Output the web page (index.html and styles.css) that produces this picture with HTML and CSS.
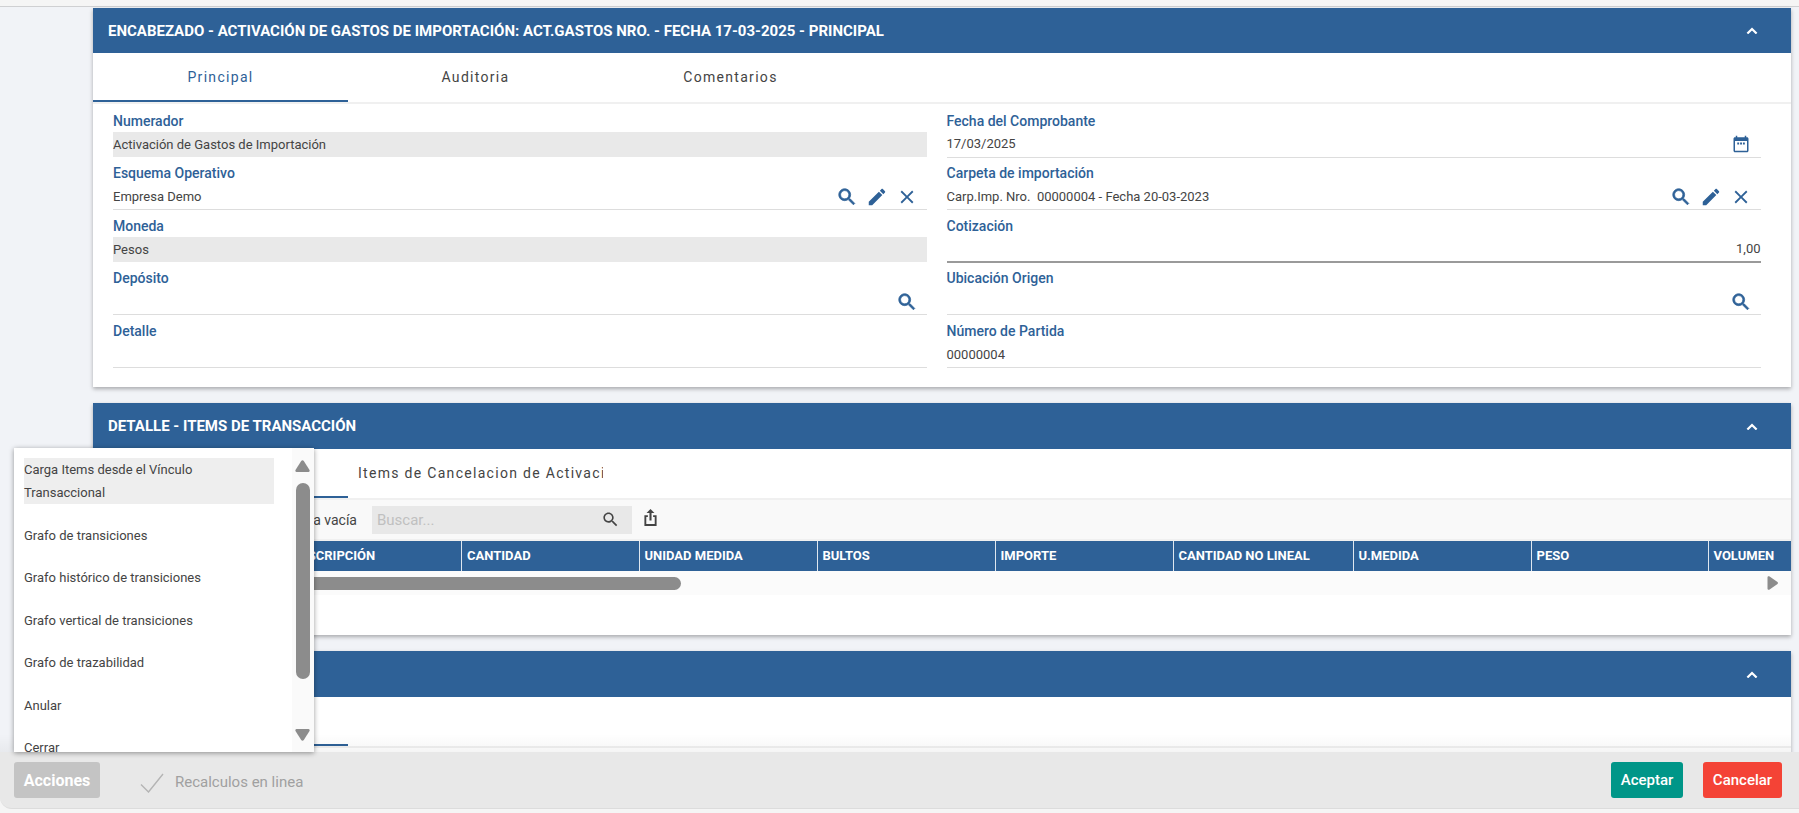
FILE: index.html
```html
<!DOCTYPE html>
<html lang="es">
<head>
<meta charset="utf-8">
<title>Activación de Gastos de Importación</title>
<link rel="stylesheet" href="styles.css">
</head>
<body>
<svg class="defs" aria-hidden="true">
  <symbol id="i-search" viewBox="0 0 24 24"><path d="M15.5 14h-.79l-.28-.27C15.41 12.59 16 11.11 16 9.5 16 5.91 13.09 3 9.5 3S3 5.91 3 9.5 5.91 16 9.5 16c1.61 0 3.09-.59 4.23-1.57l.27.28v.79l5 4.99L20.49 19l-4.99-5zm-6 0C7.01 14 5 11.99 5 9.5S7.01 5 9.5 5 14 7.01 14 9.5 11.99 14 9.5 14z"/></symbol>
  <symbol id="i-edit" viewBox="0 0 24 24"><path d="M3 17.25V21h3.75L17.81 9.94l-3.75-3.75L3 17.25zM20.71 7.04c.39-.39.39-1.02 0-1.41l-2.34-2.34c-.39-.39-1.02-.39-1.41 0l-1.83 1.83 3.75 3.75 1.83-1.83z"/></symbol>
  <symbol id="i-close" viewBox="0 0 24 24"><path d="M19 6.41L17.59 5 12 10.59 6.41 5 5 6.41 10.59 12 5 17.59 6.41 19 12 13.41 17.59 19 19 17.59 13.41 12 19 6.41z"/></symbol>
  <symbol id="i-cal" viewBox="0 0 24 24"><path d="M20 3h-1V1h-2v2H7V1H5v2H4c-1.1 0-2 .9-2 2v16c0 1.1.9 2 2 2h16c1.1 0 2-.9 2-2V5c0-1.1-.9-2-2-2zm0 18H4V8h16v13zM7 10h2.500v2.500H7zM10.800 10h2.500v2.500h-2.500zM14.600 10h2.500v2.500h-2.500z"/></symbol>
  <symbol id="i-up" viewBox="0 0 12 7"><path d="M1.400 6.500 6 2l4.600 4.500" fill="none" stroke="currentColor" stroke-width="2.200"/></symbol>
</svg>

<div class="topbar"></div>

<main class="content">
  <section class="card">
    <header class="card-head">
      <h2>ENCABEZADO - ACTIVACIÓN DE GASTOS DE IMPORTACIÓN: ACT.GASTOS NRO. - FECHA 17-03-2025 - PRINCIPAL</h2>
      <svg class="chev"><use href="#i-up"/></svg>
    </header>
    <nav class="tabs">
      <span class="tab active">Principal</span>
      <span class="tab">Auditoria</span>
      <span class="tab">Comentarios</span>
    </nav>
    <div class="form">
      <div class="field">
        <label>Numerador</label>
        <div class="value readonly">Activación de Gastos de Importación</div>
      </div>
      <div class="field">
        <label>Fecha del Comprobante</label>
        <div class="value"><span class="raise">17/03/2025</span><span class="icons"><svg class="ico cal"><use href="#i-cal"/></svg></span></div>
      </div>
      <div class="field">
        <label>Esquema Operativo</label>
        <div class="value"><span>Empresa Demo</span><span class="icons"><svg class="ico bold"><use href="#i-search"/></svg><svg class="ico"><use href="#i-edit"/></svg><svg class="ico"><use href="#i-close"/></svg></span></div>
      </div>
      <div class="field">
        <label>Carpeta de importación</label>
        <div class="value"><span class="pre">Carp.Imp. Nro.  00000004 - Fecha 20-03-2023</span><span class="icons"><svg class="ico bold"><use href="#i-search"/></svg><svg class="ico"><use href="#i-edit"/></svg><svg class="ico"><use href="#i-close"/></svg></span></div>
      </div>
      <div class="field">
        <label>Moneda</label>
        <div class="value readonly">Pesos</div>
      </div>
      <div class="field">
        <label>Cotización</label>
        <div class="value number">1,00</div>
      </div>
      <div class="field">
        <label>Depósito</label>
        <div class="value"><span></span><span class="icons"><svg class="ico bold"><use href="#i-search"/></svg></span></div>
      </div>
      <div class="field">
        <label>Ubicación Origen</label>
        <div class="value"><span></span><span class="icons"><svg class="ico bold"><use href="#i-search"/></svg></span></div>
      </div>
      <div class="field">
        <label>Detalle</label>
        <div class="value"></div>
      </div>
      <div class="field">
        <label>Número de Partida</label>
        <div class="value">00000004</div>
      </div>
    </div>
  </section>

  <section class="card">
    <header class="card-head tall">
      <h2>DETALLE - ITEMS DE TRANSACCIÓN</h2>
      <svg class="chev"><use href="#i-up"/></svg>
    </header>
    <nav class="tabs">
      <span class="tab active"></span>
      <span class="tab clipped">Items de Cancelacion de Activaci</span>
    </nav>
    <div class="toolbar">
      <span class="status">Grilla vacía</span>
      <div class="search"><span>Buscar...</span><svg class="search-ico"><use href="#i-search"/></svg></div>
      <svg class="share" viewBox="0 0 16 18"><path d="M8 0 3.800 4.200h3.100v8h2.200v-8h3.100zM5.200 6.500H1.500V18h13V6.500h-3.700v2h1.700V16h-9V8.500h1.700z"/></svg>
    </div>
    <div class="grid-head">
      <span></span>
      <span>DESCRIPCIÓN</span>
      <span>CANTIDAD</span>
      <span>UNIDAD MEDIDA</span>
      <span>BULTOS</span>
      <span>IMPORTE</span>
      <span>CANTIDAD NO LINEAL</span>
      <span>U.MEDIDA</span>
      <span>PESO</span>
      <span>VOLUMEN</span>
    </div>
    <div class="hscroll">
      <div class="hthumb"></div>
      <svg class="harrow" viewBox="0 0 11 14"><path d="M.5 1.500C.5.3 1.700-.2 2.600.6l7.900 5.400c.6.500.6 1.500 0 2L2.600 13.400c-.9.800-2.100.3-2.100-.9z"/></svg>
    </div>
    <div class="grid-empty"></div>
  </section>

  <section class="card last">
    <header class="card-head tall">
      <h2></h2>
      <svg class="chev"><use href="#i-up"/></svg>
    </header>
    <nav class="tabs">
      <span class="tab active"></span>
    </nav>
  </section>
</main>

<aside class="menu">
  <ul class="menu-list">
    <li class="selected">Carga Items desde el Vínculo Transaccional</li>
    <li>Grafo de transiciones</li>
    <li>Grafo histórico de transiciones</li>
    <li>Grafo vertical de transiciones</li>
    <li>Grafo de trazabilidad</li>
    <li>Anular</li>
    <li>Cerrar</li>
  </ul>
  <div class="vscroll">
    <svg class="varrow" viewBox="0 0 15 12"><path d="M6.200 1c.7-1 1.900-1 2.600 0l5.700 9c.5.900 0 2-1 2H1.500c-1 0-1.500-1.100-1-2z"/></svg>
    <div class="vthumb"></div>
    <svg class="varrow down" viewBox="0 0 15 12"><path d="M6.200 11c.7 1 1.900 1 2.600 0l5.700-9c.5-.9 0-2-1-2H1.500c-1 0-1.500 1.100-1 2z"/></svg>
  </div>
</aside>

<footer class="footer-wrap">
  <div class="footer">
    <button class="btn disabled">Acciones</button>
    <svg class="check" viewBox="0 0 24 20"><path d="M1 11.500 8.500 19 23 1" fill="none" stroke="currentColor" stroke-width="1.400"/></svg>
    <span class="recalc">Recalculos en linea</span>
    <button class="btn ok">Aceptar</button>
    <button class="btn cancel">Cancelar</button>
  </div>
</footer>
</body>
</html>
```
FILE: styles.css
```css
* { box-sizing: border-box; }
html, body { height: 100%; }
body {
  margin: 0;
  height: 813px;
  overflow: hidden;
  background: #f1f3f7;
  font-family: Roboto, "Liberation Sans", sans-serif;
  font-size: 13px;
  color: #444;
  position: relative;
}
.defs { width: 0; height: 0; position: absolute; }
.topbar {
  height: 7px;
  background: #f5f5f5;
  border-bottom: 1px solid #cfd0d2;
}
.content {
  display: flex;
  flex-direction: column;
  gap: 16px;
  padding: 1px 8px 0 93px;
}
.card {
  background: #fff;
  box-shadow: 0 2px 4px rgba(0, 0, 0, .3);
}
.card.last { height: 200px; }
.card-head {
  height: 45px;
  background: #2e6197;
  color: #fff;
  display: flex;
  align-items: center;
  justify-content: space-between;
  padding: 0 33px 0 15px;
}
.card-head.tall { height: 46px; }
.card-head h2 {
  margin: 0;
  font-size: 15px;
  font-weight: 700;
  line-height: 20px;
}
.chev { width: 12px; height: 7px; color: #fff; flex: none; }

.tabs {
  display: flex;
  height: 51px;
  border-bottom: 2px solid #f0f0f0;
}
.tab {
  width: 255px;
  height: 49px;
  line-height: 48px;
  text-align: center;
  font-size: 14px;
  letter-spacing: 1.3px;
  color: #444;
  white-space: nowrap;
  overflow: hidden;
}
.tab.active {
  color: #2e6197;
  border-bottom: 2px solid #2e6197;
  height: 49px;
}
.tab.clipped { text-align: left; padding-left: 10px; }

.form {
  display: grid;
  grid-template-columns: 814px 814px;
  grid-auto-rows: 52.5px;
  column-gap: 19.5px;
  padding: 1px 30px 19.5px 20px;
}
.field {
  display: flex;
  flex-direction: column;
  justify-content: flex-end;
}
.field label {
  flex: 1;
  padding-top: 4.500px;
  line-height: 22px;
  font-size: 14px;
  font-weight: 500;
  color: #2e6197;
}
.value {
  height: 25.500px;
  display: flex;
  align-items: center;
  justify-content: space-between;
  border-bottom: 1px solid #ddd;
  font-size: 13px;
  color: #444;
}
.value.readonly {
  background: #e9e9e9;
  border-bottom: 0;
  height: 25px;
  margin-bottom: .5px;
}
.value.number {
  justify-content: flex-end;
  border-bottom: 2px solid #9a9a9a;
}
.raise { position: relative; top: -1px; }
.pre { white-space: pre; }
.icons {
  display: flex;
  gap: 8px;
  padding-right: 9px;
  color: #2e6197;
}
.ico { width: 22px; height: 22px; fill: currentColor; flex: none; }
.ico.bold { stroke: currentColor; stroke-width: .8; }
.ico.cal { width: 18px; height: 18px; margin: 0 2px; }

.toolbar {
  height: 41px;
  background: #f9f9f9;
  border-bottom: 2px solid #f0f0f0;
  display: flex;
  align-items: center;
}
.status {
  width: 264px;
  text-align: right;
  font-size: 14px;
  color: #444;
  flex: none;
}
.search {
  width: 260px;
  height: 28px;
  margin-left: 15px;
  background: #e8e8e8;
  display: flex;
  align-items: center;
  justify-content: space-between;
  padding: 0 12px 0 5px;
  font-size: 15px;
  color: #c0c0c0;
}
.search-ico { width: 19px; height: 19px; fill: #444; }
.share { width: 15px; height: 17px; margin-left: 11px; fill: #444; position: relative; top: -2px; }

.grid-head {
  display: grid;
  grid-template-columns: 194px 175px 177.500px 178px 178px 178px 180px 178px 177px 83px;
  height: 30px;
  background: #2e6197;
  color: #fff;
  font-size: 13px;
  font-weight: 700;
  overflow: hidden;
}
.grid-head span {
  border-right: 1px solid #dfe7ef;
  line-height: 30px;
  padding-left: 5px;
  white-space: nowrap;
}
.grid-head span:last-child { border-right: 0; }
.hscroll {
  height: 24px;
  background: #fbfbfb;
  display: flex;
  align-items: center;
  padding: 0 13px 0 20px;
}
.hthumb {
  width: 568px;
  height: 13px;
  border-radius: 7px;
  background: #8c8c8c;
}
.harrow { width: 11px; height: 14px; margin-left: auto; fill: #8c8c8c; }
.grid-empty { height: 40px; }

.menu {
  position: absolute;
  left: 14px;
  top: 448px;
  width: 300px;
  height: 304px;
  background: #fff;
  box-shadow: 0 1px 5px rgba(0, 0, 0, .4);
  display: flex;
  overflow: hidden;
  z-index: 3;
}
.menu-list {
  list-style: none;
  margin: 0;
  padding: 10px 0 0 10px;
  width: 277.500px;
  display: flex;
  flex-direction: column;
  gap: 19.500px;
  flex: none;
}
.menu-list li {
  width: 250px;
  font-size: 13px;
  line-height: 23px;
  color: #444;
  flex: none;
}
.menu-list li.selected { background: #eeeeee; }
.vscroll {
  flex: 1;
  background: #fafafa;
  display: flex;
  flex-direction: column;
  align-items: center;
  padding-top: 12px;
}
.varrow { width: 15px; height: 12px; fill: #8c8c8c; flex: none; }
.varrow.down { margin-top: 50px; }
.vthumb {
  width: 14px;
  height: 196px;
  margin-top: 11px;
  border-radius: 7px;
  background: #8c8c8c;
  flex: none;
}

.footer-wrap {
  position: absolute;
  left: 0;
  right: 0;
  bottom: 0;
  height: 61px;
  background: #f5f5f5;
  z-index: 2;
}
.footer-wrap::before {
  content: "";
  position: absolute;
  left: 0;
  right: 8px;
  top: -18px;
  height: 18px;
  background: linear-gradient(rgba(0, 0, 0, 0), rgba(0, 0, 0, .04));
}
.footer {
  height: 57px;
  background: #e8e8e8;
  border-bottom: 1px solid #dcdcdc;
  border-bottom-left-radius: 12px;
  display: flex;
  align-items: flex-start;
  padding: 10px 17px 0 14px;
  gap: 20px;
}
.btn {
  height: 36px;
  border: 0;
  border-radius: 3px;
  color: #fff;
  font-family: inherit;
  font-size: 15px;
  font-weight: 500;
  padding: 0;
}
.btn.disabled { width: 86px; background: #c4c4c4; font-size: 16px; font-weight: 700; margin-right: 20px; }
.btn.ok { width: 72px; background: #009688; margin-left: auto; }
.btn.cancel { width: 79px; background: #f44336; }
.check { width: 24px; height: 20px; margin-top: 11px; color: #b4b4b4; flex: none; }
.recalc {
  margin-left: -9px;
  line-height: 40px;
  font-size: 15px;
  color: #a0a0a0;
}
```
